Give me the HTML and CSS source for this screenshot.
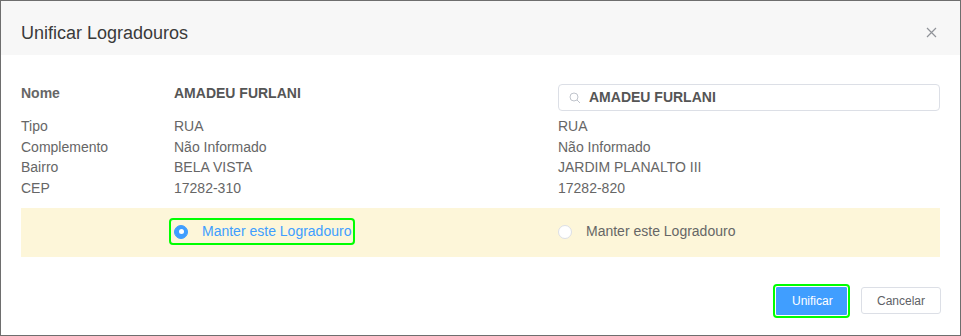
FILE: index.html
```html
<!DOCTYPE html>
<html lang="pt-BR">
<head>
  <meta charset="UTF-8" />
  <title>Unificar Logradouros</title>
  <meta name="viewport" content="width=device-width, initial-scale=1.0" />
  <link rel="stylesheet" href="styles.css">
</head>
<body>

  <div class="dialog">
    <div class="dialog-header">
      <span class="dialog-title">Unificar Logradouros</span>
      <button class="dialog-close" aria-label="Fechar">
        <svg width="11" height="11" viewBox="0 0 11 11"><path d="M1 1L10 10M10 1L1 10" stroke="#909399" stroke-width="1.2" fill="none"/></svg>
      </button>
    </div>

    <div class="dialog-body">
      <div class="row row-nome">
        <div class="label bold">Nome</div>
        <div class="value bold">AMADEU FURLANI</div>
        <div class="value">
          <div class="search">
            <svg width="12" height="12" viewBox="0 0 12 12"><circle cx="5" cy="5" r="4" stroke="#c0c4cc" stroke-width="1" fill="none"/><path d="M8 8L11 11" stroke="#c0c4cc" stroke-width="1"/></svg>
            <span class="bold">AMADEU FURLANI</span>
          </div>
        </div>
      </div>

      <div class="row">
        <div class="label">Tipo</div>
        <div class="value">RUA</div>
        <div class="value">RUA</div>
      </div>
      <div class="row">
        <div class="label">Complemento</div>
        <div class="value">Não Informado</div>
        <div class="value">Não Informado</div>
      </div>
      <div class="row">
        <div class="label">Bairro</div>
        <div class="value">BELA VISTA</div>
        <div class="value">JARDIM PLANALTO III</div>
      </div>
      <div class="row">
        <div class="label">CEP</div>
        <div class="value">17282-310</div>
        <div class="value">17282-820</div>
      </div>

      <div class="row row-keep">
        <div class="label"></div>
        <div class="value">
          <label class="radio checked">
            <span class="radio-dot"></span>
            <span class="radio-text">Manter este Logradouro</span>
          </label>
        </div>
        <div class="value">
          <label class="radio">
            <span class="radio-dot"></span>
            <span class="radio-text">Manter este Logradouro</span>
          </label>
        </div>
      </div>
    </div>

    <div class="dialog-footer">
      <button class="btn btn-primary">Unificar</button>
      <button class="btn">Cancelar</button>
    </div>
  </div>

</body>
</html>
```

FILE: styles.css
```css
* { margin: 0; padding: 0; box-sizing: border-box; }
html, body { height: 100%; font-family: 'Liberation Sans', Arial, sans-serif; }
body { background: #fff; }

.dialog {
  width: 961px; height: 336px; border: 1px solid #6e6e6e;
  background: #fff; display: flex; flex-direction: column;
}

.dialog-header {
  display: flex; justify-content: space-between; align-items: center;
  height: 54px; padding: 9px 20px 0 20px; background: #f7f7f7;
}
.dialog-title { font-size: 18px; line-height: 24px; color: #3a3a3a; }
.dialog-close { border: none; background: none; cursor: pointer; width: 12px; height: 12px; margin-right: 2px; display: flex; }

.dialog-body { padding: 28px 20px 0 20px; color: #666; font-size: 14px; }

.row { display: grid; grid-template-columns: 153px 384px 1fr; line-height: 20.5px; }
.row-nome { height: 28px; margin-bottom: 5px; align-items: start; }
.row-nome .value:last-child { padding-top: 1px; }
.bold { font-weight: bold; color: #555; }
.label { color: #666; }

.search {
  height: 27px; border: 1px solid #dcdfe6; border-radius: 4px;
  display: flex; align-items: center; gap: 8px; padding-left: 10px;
}
.search svg { flex: none; }

.row-keep {
  margin-top: 10px; height: 49px; background: #fdf6d9; align-items: center;
}

.radio {
  display: inline-flex; align-items: center; gap: 14px; height: 21px;
  padding: 0 1px 0 2px; cursor: pointer; color: #666; margin-left: -2px;
}
.radio.checked { outline: 2px solid #00ff00; outline-offset: 1px; border-radius: 1px; }
.radio.checked .radio-text { color: #409eff; }

.radio-dot {
  width: 14px; height: 14px; border-radius: 50%; border: 1px solid #dcdfe6;
  background: #fff; flex: none;
}
.radio.checked .radio-dot {
  border-color: #409eff; background: #409eff; position: relative;
}
.radio.checked .radio-dot::after {
  content: ""; position: absolute; width: 5px; height: 5px; border-radius: 50%;
  background: #fff; left: 3.5px; top: 3.5px;
}

.dialog-footer {
  display: flex; justify-content: flex-end; gap: 14px; padding: 30px 19px 0 0;
}

.btn {
  height: 27px; padding: 0 15px; font-size: 12px; font-family: inherit;
  border: 1px solid #dcdfe6; border-radius: 3px; background: #fff; color: #606266; cursor: pointer;
}
.btn-primary {
  width: 71px; height: 28px; background: #409eff; border-color: #409eff; color: #fff;
  border-radius: 1px; outline: 2px solid #00ff00; outline-offset: 1px;
}
```
